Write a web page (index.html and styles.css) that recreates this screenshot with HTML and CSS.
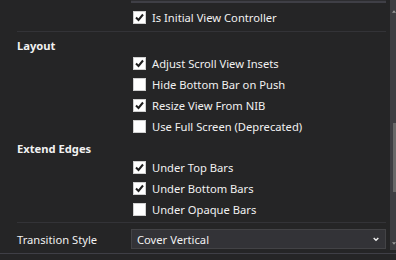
FILE: index.html
```html
<!DOCTYPE html>
<html>
<head>
<meta charset="utf-8">
<link rel="stylesheet" href="styles.css">
</head>
<body>
<div class="panel">
  <div class="content">
    <div class="prev-field"></div>
    <div class="row check-row"><span class="box checked"><svg viewBox="0 0 13 13"><path d="M3 6.5 L5.5 9 L10 3.5"/></svg></span><span class="lbl">Is Initial View Controller</span></div>
    <div class="divider"></div>
    <div class="header">Layout</div>
    <div class="row check-row"><span class="box checked"><svg viewBox="0 0 13 13"><path d="M3 6.5 L5.5 9 L10 3.5"/></svg></span><span class="lbl">Adjust Scroll View Insets</span></div>
    <div class="row check-row"><span class="box"></span><span class="lbl">Hide Bottom Bar on Push</span></div>
    <div class="row check-row"><span class="box checked"><svg viewBox="0 0 13 13"><path d="M3 6.5 L5.5 9 L10 3.5"/></svg></span><span class="lbl">Resize View From NIB</span></div>
    <div class="row check-row"><span class="box"></span><span class="lbl">Use Full Screen (Deprecated)</span></div>
    <div class="header header2">Extend Edges</div>
    <div class="row check-row"><span class="box checked"><svg viewBox="0 0 13 13"><path d="M3 6.5 L5.5 9 L10 3.5"/></svg></span><span class="lbl">Under Top Bars</span></div>
    <div class="row check-row"><span class="box checked"><svg viewBox="0 0 13 13"><path d="M3 6.5 L5.5 9 L10 3.5"/></svg></span><span class="lbl">Under Bottom Bars</span></div>
    <div class="row check-row"><span class="box"></span><span class="lbl">Under Opaque Bars</span></div>
    <div class="divider divider2"></div>
    <div class="select-row">
      <span class="field-label">Transition Style</span>
      <div class="select"><span>Cover Vertical</span><svg class="chev" viewBox="0 0 7 5"><path d="M0.8 0.8 L3.5 3.5 L6.2 0.8"/></svg></div>
    </div>
  </div>
  <div class="scrollbar">
    <svg class="arrow up" viewBox="0 0 5 3"><path d="M0 3 L2.5 0 L5 3Z"/></svg>
    <div class="thumb"></div>
    <svg class="arrow down" viewBox="0 0 5 3"><path d="M0 0 L2.5 3 L5 0Z"/></svg>
  </div>
</div>
<div class="footer"></div>
</body>
</html>
```
FILE: styles.css
```css
html, body {
  margin: 0;
  padding: 0;
  background: #252526;
  width: 396px;
  height: 260px;
  overflow: hidden;
  font-family: "Noto Sans", "Open Sans", sans-serif;
  font-size: 11.2px;
  color: #f1f1f1;
}
.panel {
  display: flex;
  height: 252px;
}
.content {
  width: 386px;
  padding-left: 17px;
  box-sizing: border-box;
  margin-right: 4px;
}
.prev-field {
  height: 3px;
  margin-left: 114px;
  background: #3f3f46;
  border-top: 1px solid #2d2d30;
  box-sizing: border-box;
}
.row {
  height: 21px;
  display: flex;
  align-items: center;
  margin-left: 116px;
}
.prev-field + .row {
  margin-top: 4px;
}
.box {
  width: 13px;
  height: 13px;
  background: #ffffff;
  border: 1px solid #d0d0d0;
  box-sizing: border-box;
  flex: none;
  display: flex;
}
.box svg {
  width: 13px;
  height: 13px;
  margin: -1px;
}
.box path {
  fill: none;
  stroke: #1e1e1e;
  stroke-width: 2;
}
.lbl {
  margin-left: 6px;
  line-height: 15px;
  white-space: nowrap;
}
.divider {
  height: 1px;
  background: #333337;
  margin-top: 3px;
}
.header {
  font-weight: bold;
  height: 21px;
  box-sizing: border-box;
  padding-top: 6px;
  line-height: 15px;
}
.header2 {
  height: 20px;
  padding-top: 4px;
}
.divider2 {
  margin-top: 2px;
}
.select-row {
  display: flex;
  align-items: center;
  margin-top: 6px;
}
.field-label {
  width: 114px;
  line-height: 15px;
}
.select {
  flex: 1;
  height: 20px;
  box-sizing: border-box;
  background: #333337;
  border: 1px solid #434346;
  display: flex;
  align-items: center;
  padding-left: 5px;
  padding-right: 6px;
}
.select span {
  flex: 1;
  line-height: 15px;
}
.chev {
  width: 6px;
  height: 5px;
}
.chev path {
  fill: none;
  stroke: #f1f1f1;
  stroke-width: 1.6;
}
.scrollbar {
  width: 6px;
  background: #3e3e42;
  position: relative;
  height: 250px;
}
.thumb {
  position: absolute;
  left: 3px;
  width: 3px;
  top: 123px;
  height: 69px;
  background: #686868;
}
.arrow {
  position: absolute;
  left: 2px;
  width: 4px;
  height: 3px;
  fill: #999999;
}
.arrow.up { top: 10px; }
.arrow.down { top: 242px; }
.footer {
  height: 1px;
  background: #3f3f46;
  margin-top: 1px;
}
```
